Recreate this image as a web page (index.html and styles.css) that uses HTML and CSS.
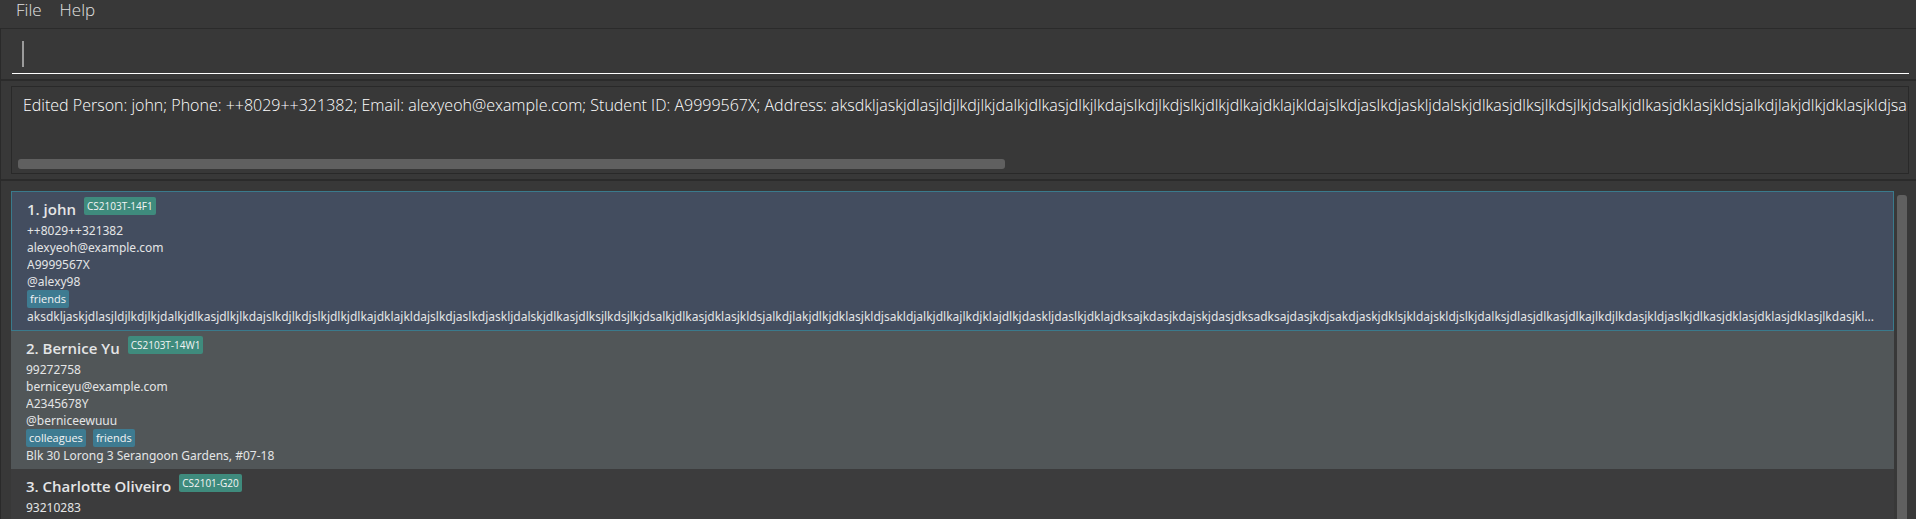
FILE: index.html
```html
<!DOCTYPE html>
<html lang="en">
<head>
<meta charset="utf-8">
<title>Address Book</title>
<link rel="stylesheet" href="styles.css">
</head>
<body>
<nav class="menu-bar">
  <button class="menu" type="button">File</button>
  <button class="menu" type="button">Help</button>
</nav>
<main class="panes">
  <form class="pane command-pane">
    <label class="command-box">
      <span class="caret"></span>
      <input class="command-input" type="text" aria-label="Command">
    </label>
  </form>
  <section class="pane result-pane">
    <div class="result-box">
      <p class="result-text">Edited Person: john; Phone: ++8029++321382; Email: alexyeoh@example.com; Student ID: A9999567X; Address: aksdkljaskjdlasjldjlkdjlkjdalkjdlkasjdlkjlkdajslkdjlkdjslkjdlkjdlkajdklajkldajslkdjaslkdjaskljdalskjdlkasjdlksjlkdsjlkjdsalkjdlkasjdklasjkldsjalkdjlakjdlkjdklasjkldjsa</p>
      <div class="scroll-track"><div class="scroll-thumb"></div></div>
    </div>
  </section>
  <section class="pane list-pane">
    <ul class="person-list">
      <li class="card selected">
        <div class="heading"><h2 class="name">1. john</h2><span class="tag group">CS2103T-14F1</span></div>
        <p class="line">++8029++321382</p>
        <p class="line">alexyeoh@example.com</p>
        <p class="line">A9999567X</p>
        <p class="line">@alexy98</p>
        <div class="tags"><span class="tag">friends</span></div>
        <p class="line">aksdkljaskjdlasjldjlkdjlkjdalkjdlkasjdlkjlkdajslkdjlkdjslkjdlkjdlkajdklajkldajslkdjaslkdjaskljdalskjdlkasjdlksjlkdsjlkjdsalkjdlkasjdklasjkldsjalkdjlakjdlkjdklasjkldjsakldjalkjdlkajlkdjklajdlkjdaskljdaslkjdklajdksajkdasjkdajskjdasjdksadksajdasjkdjsakdjaskjdklsjkldajskldjslkjdalksjdlasjdlkasjdlkajlkdjlkdasjkldjaslkjdlkasjdklasjdklasjdklasjlkdasjkl...</p>
      </li>
      <li class="card even">
        <div class="heading"><h2 class="name">2. Bernice Yu</h2><span class="tag group">CS2103T-14W1</span></div>
        <p class="line">99272758</p>
        <p class="line">berniceyu@example.com</p>
        <p class="line">A2345678Y</p>
        <p class="line">@berniceewuuu</p>
        <div class="tags"><span class="tag">colleagues</span><span class="tag">friends</span></div>
        <p class="line">Blk 30 Lorong 3 Serangoon Gardens, #07-18</p>
      </li>
      <li class="card">
        <div class="heading"><h2 class="name">3. Charlotte Oliveiro</h2><span class="tag group">CS2101-G20</span></div>
        <p class="line">93210283</p>
      </li>
    </ul>
    <div class="list-scroll"></div>
  </section>
</main>
</body>
</html>
```
FILE: styles.css
```css
* { box-sizing: border-box; }

body {
  display: flex;
  flex-direction: column;
  height: 100vh;
  margin: 0;
  overflow: hidden;
  background: #383838;
  color: #fff;
  font-family: "Open Sans", "Noto Sans", sans-serif;
}

p, h2, ul { margin: 0; padding: 0; }

.menu-bar {
  display: flex;
  gap: 18px;
  height: 28px;
  padding: 0 16px;
}

.menu {
  height: 20px;
  padding: 0;
  border: 0;
  background: none;
  color: #e0e0e0;
  font: 300 17px/20px "Open Sans", sans-serif;
}

.panes {
  display: flex;
  flex: 1;
  flex-direction: column;
  min-height: 0;
  border-left: 1px solid #2a2a2a;
}

.pane { border-top: 2px solid #2b2b2b; }

.command-pane {
  padding: 5px 7px 5px 11px;
  border-top-width: 1px;
}

.command-box {
  display: flex;
  align-items: center;
  height: 40px;
  padding-left: 10px;
  border-bottom: 1px solid #fff;
}

.caret {
  width: 2px;
  height: 26px;
  margin-top: 1px;
  background: #9b9b9b;
}

.command-input {
  flex: 1;
  border: 0;
  outline: 0;
  background: none;
  color: #fff;
  font: 300 17px "Open Sans", sans-serif;
}

.result-pane { padding: 5px 7px 5px 10px; }

.result-box {
  display: flex;
  flex-direction: column;
  justify-content: space-between;
  height: 88px;
  padding: 6px 0 4px 11px;
  border: 1px solid #292929;
}

.result-text {
  overflow: hidden;
  font-size: 16px;
  font-weight: 300;
  line-height: 24px;
  white-space: nowrap;
}

.scroll-track { margin-left: -5px; }

.scroll-thumb {
  width: 52.2%;
  height: 10px;
  border-radius: 3px;
  background: #606060;
}

.list-pane {
  display: flex;
  flex: 1;
  gap: 3px;
  min-height: 0;
  padding: 10px 9px 0 10px;
}

.person-list {
  flex: 1;
  min-width: 0;
  overflow: hidden;
  list-style: none;
}

.card {
  padding: 5px 10px 5px 15px;
  background: #3c3c3d;
  color: #e4e5e6;
}

.card.even { background: #515658; }

.card.selected {
  padding-right: 9px;
  border: 1px solid #3a7a8c;
  background: #434d5f;
}

.heading {
  display: flex;
  gap: 8px;
  height: 25px;
}

.name {
  font-size: 15px;
  font-weight: 600;
  line-height: 25px;
}

.line {
  overflow: hidden;
  font-family: "Noto Sans", sans-serif;
  font-size: 12px;
  line-height: 17px;
  text-overflow: ellipsis;
  white-space: nowrap;
}

.tags { display: flex; gap: 7px; }

.tag {
  height: 18px;
  padding: 0 3px;
  border-radius: 2px;
  background: #3e7b91;
  color: #f4f4f4;
  font-size: 11px;
  line-height: 18px;
}

.tag.group {
  background: #3f8b7d;
  font-size: 10px;
}

.list-scroll {
  width: 10px;
  margin-top: 4px;
  border-radius: 3px 3px 0 0;
  background: #606060;
}
```
